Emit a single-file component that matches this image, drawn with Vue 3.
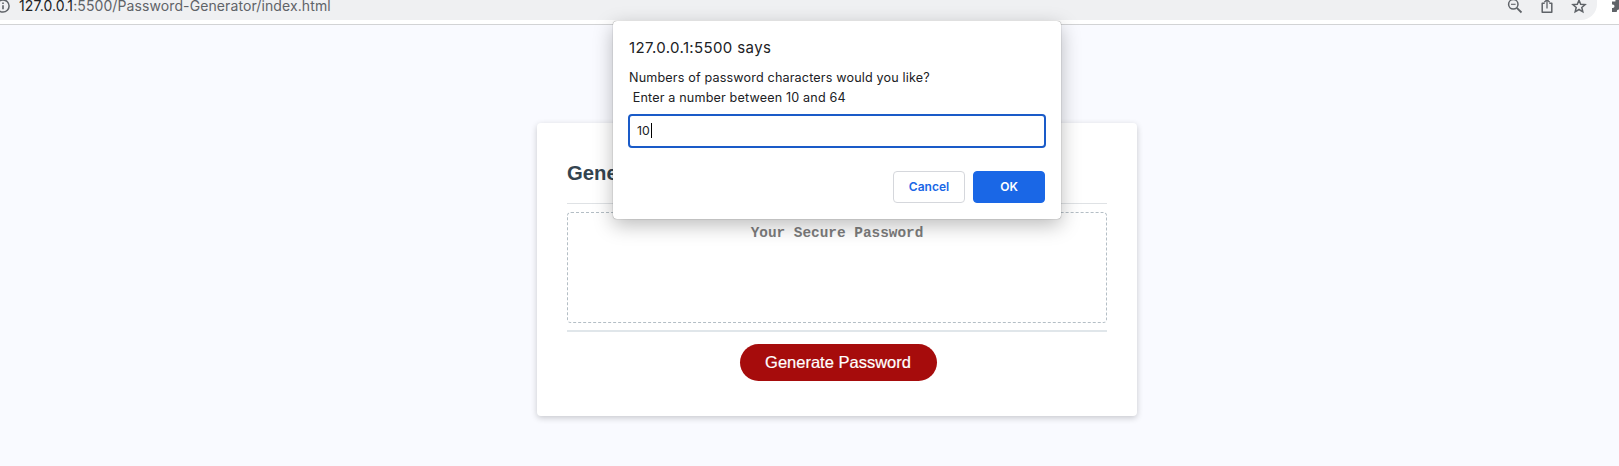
<script setup>
const host = '127.0.0.1'
const path = ':5500/Password-Generator/index.html'
const length = 10
</script>

<template>
  <div class="window">
    <header class="toolbar">
      <div class="omnibox">
        <svg class="info" width="16" height="16" viewBox="0 0 16 16">
          <circle cx="8" cy="8" r="6.1" fill="none" stroke="#5f6368" stroke-width="1.5" />
          <path d="M8 7.3v4M8 4.4v1.6" stroke="#5f6368" stroke-width="1.6" />
        </svg>
        <span class="url"><b>{{ host }}</b>{{ path }}</span>
        <div class="actions">
          <svg width="16" height="16" viewBox="0 0 16 16" fill="none" stroke="#5f6368">
            <circle cx="6.3" cy="6.3" r="4.7" stroke-width="1.5" />
            <path d="M9.8 9.8l4.7 4.7" stroke-width="1.8" />
            <path d="M4 6.3h4.6" stroke-width="1.1" />
          </svg>
          <svg width="16" height="16" viewBox="0 0 16 16" fill="none" stroke="#5f6368" stroke-width="1.5">
            <path d="M5.7 5.2H3.2v9.1h9.6V5.2h-2.5" stroke-linejoin="round" />
            <path d="M8 10.5V2M5.3 4.3L8 1.6l2.7 2.7" stroke-width="1.3" />
          </svg>
          <svg width="16" height="16" viewBox="0 0 16 16" fill="none" stroke="#5f6368" stroke-width="1.5">
            <path d="M8 2.2l1.7 4 4.4.4-3.3 2.9 1 4.3L8 11.5l-3.8 2.3 1-4.3-3.3-2.9 4.4-.4z" />
          </svg>
        </div>
      </div>
      <svg class="puzzle" width="16" height="16" viewBox="0 0 16 16">
        <path fill="#5f6368" d="M1 3.5h3.4V3a2 2 0 0 1 4 0v.5H14V14H9.6v-.7a1.9 1.9 0 0 0-3.8 0v.7H1v-4.1h.8a1.7 1.7 0 0 0 0-3.4H1z" />
      </svg>
    </header>

    <main class="page">
      <section class="card">
        <h2>Generate a Password</h2>
        <div class="password">Your Secure Password</div>
        <footer>
          <button class="generate">Generate Password</button>
        </footer>
      </section>
    </main>

    <div class="dialog">
      <h1>127.0.0.1:5500 says</h1>
      <p class="message">Numbers of password characters would you like?</p>
      <p class="message">&nbsp;Enter a number between 10 and 64</p>
      <div class="field"><span>{{ length }}</span><i class="caret"></i></div>
      <div class="buttons">
        <button class="cancel">Cancel</button>
        <button class="ok">OK</button>
      </div>
    </div>
  </div>
</template>

<style>
body { overflow: hidden; }
</style>

<style scoped>
* { box-sizing: border-box; }
.window {
  position: relative;
  height: 466px;
  overflow: hidden;
  background: #f9faff;
  font-family: Inter, "Liberation Sans", sans-serif;
}
.toolbar {
  display: flex;
  height: 25px;
  background: #fff;
  border-bottom: 1px solid #d2d3d5;
  overflow: hidden;
}
.omnibox {
  display: flex;
  flex: none;
  width: 1597px;
  height: 20px;
  background: #eff0f2;
  border-bottom-right-radius: 16px;
}
.info { flex: none; margin: -2px 0 0 -5px; }
.url {
  margin: -4px 0 0 8px;
  font-size: 14px;
  line-height: 20px;
  letter-spacing: 0.1px;
  color: #5f6368;
  white-space: nowrap;
}
.url b { font-weight: 400; color: #202124; }
.actions { display: flex; gap: 16px; margin: -2px 10px 0 auto; }
.puzzle { flex: none; margin: -2px 0 0 14px; }
.page { display: flex; justify-content: center; padding: 98px 0 0 55px; }
.card {
  width: 600px;
  height: 293px;
  padding: 30px;
  background: #fff;
  border-radius: 4px;
  box-shadow: 0 2px 6px rgba(0, 0, 0, .2);
}
h2 {
  height: 51px;
  margin: 0 0 8px;
  border-bottom: 1px solid #dfe2e5;
  font: bold 20.3px/41px "Liberation Sans", Arial, sans-serif;
  color: #34444f;
}
.password {
  height: 111px;
  padding-top: 12px;
  border: 1px dashed #b4bec5;
  border-radius: 4px;
  text-align: center;
  font: bold 14.4px/17px "Liberation Mono", monospace;
  color: #7c7c7c;
}
footer {
  margin-top: 7px;
  padding: 12px 0 0 2px;
  border-top: 2px solid #e0e6ea;
  text-align: center;
}
button { padding: 0; cursor: pointer; }
.generate {
  display: block;
  width: 197px;
  height: 37px;
  margin: 0 auto;
  border: 0;
  border-radius: 19px;
  background: #a60c0c;
  color: #fff;
  font: 16.5px/37px "Liberation Sans", Arial, sans-serif;
  -webkit-text-stroke: .2px #fff;
}
.dialog {
  position: absolute;
  left: 613px;
  top: 21px;
  width: 448px;
  height: 198px;
  padding: 16px 15px;
  background: #fff;
  border-radius: 4px;
  box-shadow: 0 0 1px rgba(0, 0, 0, .6), 0 6px 20px rgba(0, 0, 0, .27);
  color: #202124;
}
h1 {
  margin: 0 0 9px 1px;
  font-size: 15px;
  font-weight: 400;
  line-height: 22px;
  letter-spacing: .37px;
}
.message {
  margin: 0 0 0 1px;
  font-size: 12.6px;
  line-height: 20px;
  letter-spacing: .16px;
}
.field {
  display: flex;
  align-items: center;
  height: 34px;
  margin-top: 6px;
  padding: 0 0 2px 7px;
  border: 2px solid #1a5bc8;
  border-radius: 4px;
  font-size: 12.3px;
}
.caret { width: 1px; height: 15px; margin-left: 1px; background: #000; }
.buttons { display: flex; justify-content: flex-end; gap: 8px; margin: 23px 1px 0 0; }
.buttons button {
  width: 72px;
  height: 32px;
  border-radius: 4px;
  font: 600 12px/30px Inter, sans-serif;
}
.cancel { border: 1px solid #d5d7dc; background: #fff; color: #1a67e6; }
.ok { border: 1px solid #1a67e6; background: #1a67e6; color: #fff; }
</style>
